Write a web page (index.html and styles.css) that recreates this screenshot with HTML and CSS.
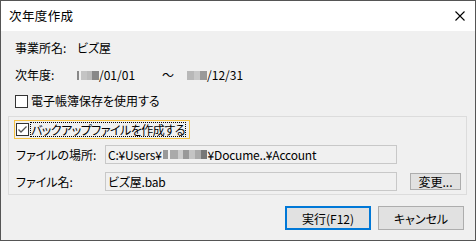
FILE: index.html
```html
<!DOCTYPE html>
<html lang="ja">
<head>
<meta charset="utf-8">
<link rel="stylesheet" href="styles.css">
</head>
<body>
<div class="window">
  <div class="titlebar">
    <span class="title">次年度作成</span>
    <svg class="close" width="10" height="10" viewBox="0 0 10 10"><path d="M0.5 0.5 L9.5 9.5 M9.5 0.5 L0.5 9.5" stroke="#000" stroke-width="1.1" fill="none"/></svg>
  </div>
  <div class="content">
    <div class="row row1">
      <span class="lbl">事業所名:</span><span class="val">ビズ屋</span>
    </div>
    <div class="row row2">
      <span class="lbl">次年度:</span>
      <span class="val"><span class="mask mask-year"></span>/01/01</span>
      <span class="tilde">～</span>
      <span class="val"><span class="mask mask-year2"></span>/12/31</span>
    </div>
    <label class="row row3">
      <span class="cb"></span><span>電子帳簿保存を使用する</span>
    </label>
    <div class="group">
      <div class="focusrow">
        <span class="cb checked"><svg width="11" height="11" viewBox="0 0 11 11"><path d="M1.5 5.5 L4 8 L9.5 2.5" stroke="#555" stroke-width="1.3" fill="none"/></svg></span><span class="dotted">バックアップファイルを作成する</span>
      </div>
      <div class="frow">
        <span class="flbl">ファイルの場所:</span>
        <div class="tb">C:¥Users¥<span class="mask mask-user"></span>¥Docume..¥Account</div>
      </div>
      <div class="frow frow2">
        <span class="flbl">ファイル名:</span>
        <div class="tb">ビズ屋.bab</div>
        <button class="btn small">変更...</button>
      </div>
    </div>
    <div class="actions">
      <button class="btn big default">実行(F12)</button>
      <button class="btn big">キャンセル</button>
    </div>
  </div>
</div>
</body>
</html>
```
FILE: styles.css
```css
* { box-sizing: border-box; }
html, body { margin: 0; padding: 0; background: #fff; }
body {
  font-family: "Noto Sans CJK JP", sans-serif;
  font-size: 12px;
  color: #000;
  font-feature-settings: "palt";
}
.window {
  width: 476px;
  height: 241px;
  border: 1px solid #555;
  display: flex;
  flex-direction: column;
  background: #f0f0f0;
}
.titlebar {
  height: 30px;
  background: #fff;
  display: flex;
  align-items: center;
  justify-content: space-between;
  padding: 0 10px 0 8px;
  flex: none;
}
.title { font-size: 12.5px; line-height: 16px; letter-spacing: 0.4px; }
.close { display: block; }
.content {
  flex: 1;
  display: flex;
  flex-direction: column;
  padding-top: 8px;
}
.row {
  display: flex;
  align-items: center;
  height: 18px;
  padding-left: 14px;
  line-height: 18px;
}
.row2 { margin-top: 9px; }
.row3 { margin-top: 8px; }
.lbl { width: 62px; flex: none; }
.val { display: inline-flex; align-items: center; }
.tilde { margin: 0 0 0 27px; width: 25px; flex: none; }
.mask {
  display: inline-block;
  height: 9px;
}
.mask-year {
  width: 22px;
  background: linear-gradient(90deg, #888 0 2px, #f0f0f0 2px 4px, #c4c4c4 4px 10px, #bbb 10px 15px, #888 15px 22px);
}
.mask-year2 {
  width: 20px;
  background: linear-gradient(90deg, #b8b8b8 0 7px, #c8c8c8 7px 13px, #999 13px 20px);
}
.mask-user {
  width: 44px;
  margin: 0 1px;
  background: linear-gradient(90deg, #999 0 5px, #f0f0f0 5px 7px, #aaa 7px 15px, #ccc 15px 20px, #999 20px 26px, #c4c4c4 26px 32px, #aaa 32px 38px, #777 38px 44px);
}
.cb {
  width: 13px;
  height: 13px;
  border: 1px solid #333;
  background: #fff;
  flex: none;
  margin-right: 3px;
  display: flex;
  align-items: center;
  justify-content: center;
}
.group {
  margin: 6px 8px 0 7px;
  border: 1px solid #dcdcdc;
  height: 79px;
  padding: 3px 0 0 5px;
  display: flex;
  flex-direction: column;
}
.focusrow {
  display: flex;
  align-items: center;
  align-self: flex-start;
  height: 19px;
  border: 1px solid #f5c142;
  padding: 0 3px 0 1px;
  white-space: nowrap;
}
.focusrow .cb { margin-right: 1px; }
.dotted {
  outline: 1px dotted #000;
  outline-offset: -1px;
  line-height: 15px;
  padding: 0 1px;
  letter-spacing: -0.5px;
  white-space: nowrap;
}
.frow {
  display: flex;
  align-items: center;
  margin-top: 5px;
  height: 20px;
}
.frow2 { margin-top: 7px; }
.flbl { width: 91px; padding-left: 2px; flex: none; }
.tb {
  width: 292px;
  height: 19px;
  border: 1px solid #c8c8c8;
  background: #f0f0f0;
  display: flex;
  align-items: center;
  padding-left: 2px;
  white-space: nowrap;
  overflow: hidden;
  letter-spacing: -0.2px;
}
.btn {
  font-family: inherit;
  font-size: 12px;
  font-feature-settings: "palt";
  color: #000;
  background: #e1e1e1;
  border: 1px solid #adadad;
  padding: 0;
  margin: 0;
}
.small {
  width: 51px;
  height: 17px;
  margin-left: 13px;
  line-height: 15px;
}
.actions {
  display: flex;
  justify-content: flex-end;
  gap: 7px;
  padding: 11px 11px 0 0;
}
.big {
  width: 86px;
  height: 24px;
}
.default { border: 2px solid #0078d7; }
```
